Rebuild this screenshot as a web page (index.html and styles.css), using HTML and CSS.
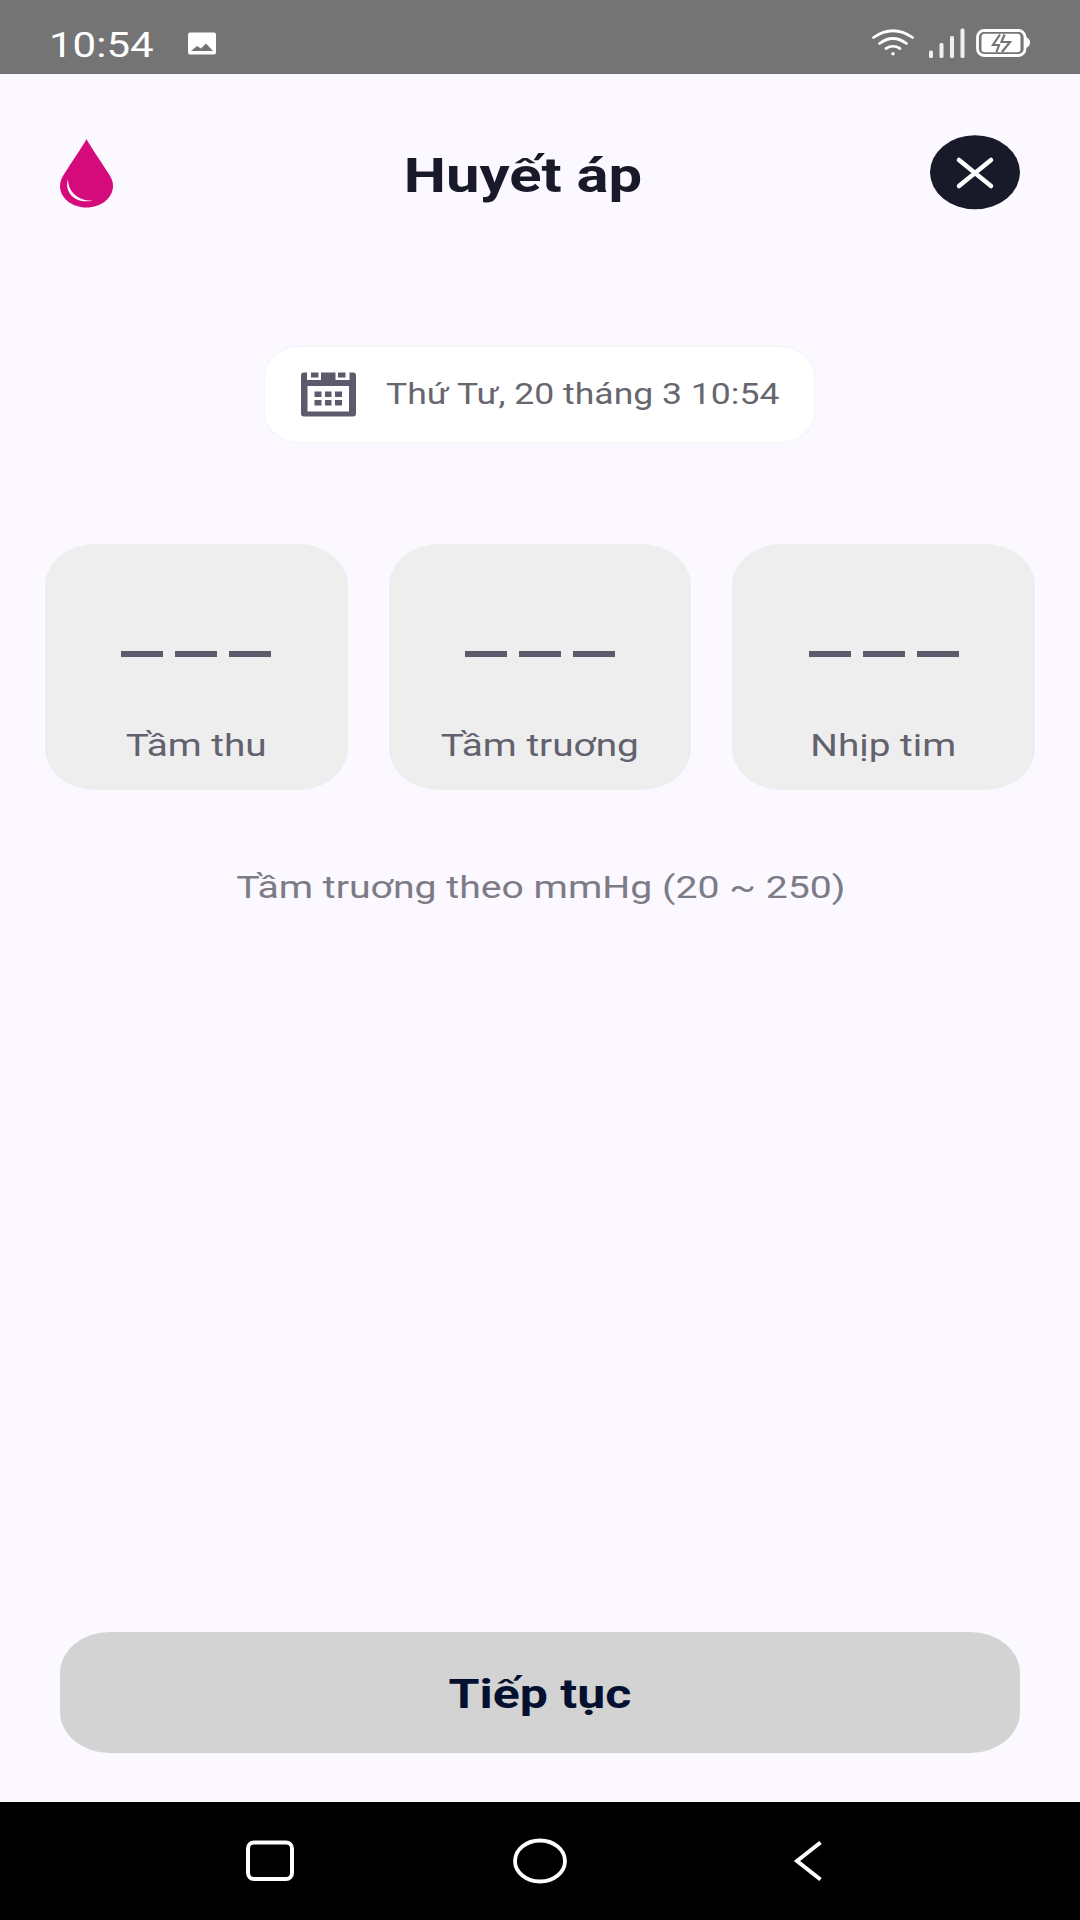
FILE: index.html
```html
<!DOCTYPE html>
<html lang="vi">
<head>
<meta charset="utf-8">
<title>Huyết áp</title>
<link rel="stylesheet" href="styles.css">
</head>
<body>
<header class="status">
  <span class="clock wide">10:54</span>
  <svg class="photo" width="30" height="24" viewBox="0 0 30 24"><path fill="#fff" fill-rule="evenodd" d="M3 .5h24q2 0 2 2v18q0 2-2 2H3q-2 0-2-2v-18q0-2 2-2zM4 19h22l-7-7.500-5 5-4-2.500z"/></svg>
  <div class="signals">
    <svg class="wifi" width="44" height="30" viewBox="0 0 44 30" fill="none" stroke="#fff" stroke-width="2.700" stroke-linecap="round"><path d="M2.500 9.500Q22-4 41.500 9.500M8.500 15.500Q22 5.500 35.500 15.500M15 20.500Q22 16 29 20.500"/><circle cx="22" cy="25.800" r="1.800" fill="#fff" stroke="none"/></svg>
    <svg width="38" height="30" viewBox="0 0 38 30" fill="#f0f0f0"><rect x="1" y="22.500" width="4" height="7.500" rx="1.500"/><rect x="11.500" y="15" width="4" height="15" rx="1.500"/><rect x="22" y="8" width="4" height="22" rx="1.500"/><rect x="32.500" y="0.500" width="4" height="29.500" rx="1.500"/></svg>
    <svg width="55" height="30" viewBox="0 0 55 30"><rect x="1.500" y="2.500" width="47.500" height="25" rx="6.500" fill="none" stroke="#fff" stroke-width="2.800"/><path d="M50 9q4 1.500 4 5.500t-4 5.500z" fill="#fff"/><rect x="5.500" y="5.800" width="39" height="18.400" rx="3" fill="#fff"/><path d="M24 6.500L17 17h6l-2.500 7M28.500 6.500L25.500 14H34l-8 10" fill="none" stroke="#747474" stroke-width="2.200"/></svg>
  </div>
</header>
<main class="screen">
  <div class="topbar">
    <svg width="53" height="70" viewBox="0 0 53 70"><path fill="#d50a7b" d="M26.500 1C29.500 7 40 22 48.500 35.500 51.500 40 53 43.500 53 48 53 60 41 69.500 26.500 69.500S0 60 0 48c0-4.500 1.500-8 4.500-12.500C13 22 23.500 7 26.500 1z"/><path fill="#fbf8ff" d="M8 41C4 53 14 67 33 62.500 20 63.500 8 55 8 41z"/></svg>
    <h1 class="title wide">Huyết áp</h1>
    <button class="close" aria-label="Đóng"><svg width="90" height="75" viewBox="0 0 90 75"><ellipse cx="45" cy="37.300" rx="45" ry="37" fill="#191a29"/><path d="M29 25l32 26M61 25L29 51" stroke="#fff" stroke-width="4.500" stroke-linecap="round"/></svg></button>
  </div>
  <div class="date">
    <svg class="calendar" width="55" height="46" viewBox="0 0 55 46"><path fill="#5c5b6b" fill-rule="evenodd" d="M3 .5h3V8h14V.5h14.500V8h14V.5H52q3 0 3 3v38q0 3-3 3H3q-3 0-3-3v-38q0-3 3-3zM6.500 14v25.500h41.500V14z"/><path fill="#5c5b6b" d="M10 .5h7.500v5H10zM37 .5h7.500v5H37zM13.500 19.500h7V25h-7zM24 19.500h6.500V25H24zM34 19.500h7V25h-7zM13.500 28h7v5.500h-7zM24 28h6.500v5.500H24zM34 28h7v5.500h-7z"/></svg>
    <span class="date-text wide">Thứ Tư, 20 tháng 3 10:54</span>
  </div>
  <section class="cards">
    <div class="card"><div class="dashes"><i></i><i></i><i></i></div><span class="label wide">Tầm thu</span></div>
    <div class="card"><div class="dashes"><i></i><i></i><i></i></div><span class="label wide">Tầm truơng</span></div>
    <div class="card"><div class="dashes"><i></i><i></i><i></i></div><span class="label wide">Nhịp tim</span></div>
  </section>
  <p class="hint wide">Tầm truơng theo mmHg (20 ~ 250)</p>
  <button class="next"><span class="next-text wide">Tiếp tục</span></button>
</main>
<nav class="nav">
  <svg width="50" height="42" viewBox="0 0 50 42"><rect x="3" y="2.500" width="44" height="36.500" rx="6" fill="none" stroke="#fff" stroke-width="4"/></svg>
  <svg width="56" height="46" viewBox="0 0 56 46"><ellipse cx="28" cy="23" rx="25" ry="20.500" fill="none" stroke="#fff" stroke-width="3.800"/></svg>
  <svg width="34" height="42" viewBox="0 0 34 42"><path d="M27.500 2.500L4 21l23.500 18.500" fill="none" stroke="#fff" stroke-width="4"/></svg>
</nav>
</body>
</html>
```
FILE: styles.css
```css
* { box-sizing: border-box; margin: 0; padding: 0; }
body {
  width: 1080px;
  height: 1920px;
  display: flex;
  flex-direction: column;
  overflow: hidden;
  background: #fbf8ff;
  font-family: Roboto, "Noto Sans", sans-serif;
}
svg { display: block; flex: none; }
button { border: 0; background: none; font: inherit; }

/* Text is set with an expanded width across the whole screen. */
.wide { display: block; white-space: nowrap; transform: scaleX(1.22); }

.status {
  height: 73.500px;
  flex: none;
  display: flex;
  align-items: center;
  padding: 13px 49px 0 49px;
  background: #747474;
}
.clock { width: 138px; padding-top: 4px; font-size: 35px; color: #fff; transform: scaleX(1.2); transform-origin: left; }
.photo { margin-top: 1px; }
.signals { margin-left: auto; padding-bottom: 1px; display: flex; align-items: center; gap: 10px; }
.wifi { margin-right: 3px; }
.screen { flex: 1; display: flex; flex-direction: column; align-items: center; }
.topbar {
  width: 960px;
  height: 76px;
  margin-top: 61px;
  display: flex;
  align-items: center;
  justify-content: space-between;
}
.title { padding: 6px 0 0 3px; font-size: 49px; font-weight: 700; color: #191a29; }
.close { width: 90px; height: 75px; }
.date {
  width: 553px;
  height: 99px;
  margin-top: 134px;
  margin-right: 2px;
  padding: 0 0 1px 36px;
  display: flex;
  align-items: center;
  gap: 30px;
  border-radius: 38px / 32px;
  background: #fff;
  border: 2px solid #f9f6fb;
}
.calendar { margin-top: 2px; }
.date-text { font-size: 29px; color: #67666f; transform: scaleX(1.226); transform-origin: left; }
.cards {
  width: 990px;
  height: 246px;
  margin-top: 100px;
  display: grid;
  grid-template-columns: repeat(3, 1fr);
  gap: 41px;
}
.card {
  display: flex;
  flex-direction: column;
  align-items: center;
  padding-top: 107px;
  gap: 68px;
  border-radius: 50px / 42px;
  background: #eee;
}
.dashes { display: flex; gap: 12px; }
.dashes i { width: 42px; height: 6px; background: #5c5b6b; }
.label { font-size: 32px; line-height: 40px; color: #62616d; transform: scaleX(1.21); }
.hint { margin-top: 77px; padding-left: 1px; font-size: 32px; line-height: 40px; color: #7d7b86; transform: scaleX(1.225); }
.next {
  width: 960px;
  height: 121px;
  margin-top: auto;
  margin-bottom: 49px;
  display: flex;
  align-items: center;
  justify-content: center;
  border-radius: 50px / 41px;
  background: #d3d3d3;
}
.next-text { padding-top: 4px; font-size: 41px; font-weight: 700; color: #04102f; }
.nav {
  height: 118.500px;
  flex: none;
  display: grid;
  grid-template-columns: repeat(3, 270px);
  justify-content: center;
  place-items: center;
  background: #000;
}
```
